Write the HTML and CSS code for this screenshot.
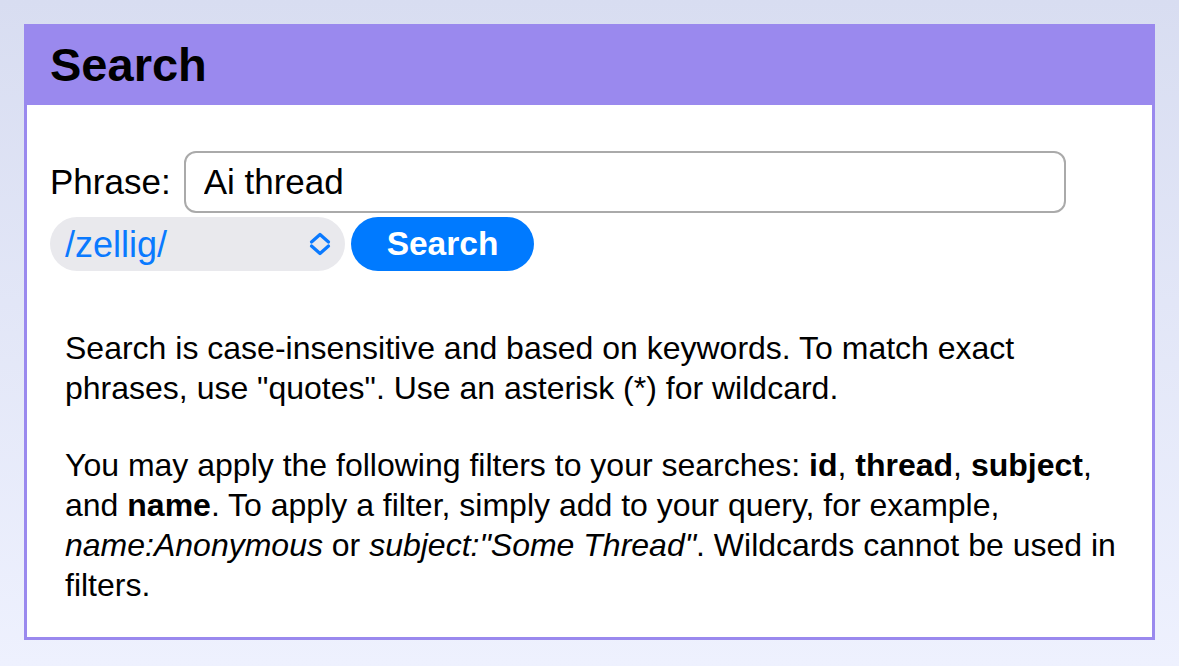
FILE: index.html
```html
<!DOCTYPE html>
<html lang="en">
<head>
<meta charset="utf-8">
<title>Search</title>
<link rel="stylesheet" href="styles.css">
</head>
<body>
<div class="panel">
  <div class="panel-header"><h1 class="panel-title">Search</h1></div>
  <div class="panel-body">
    <form class="search-form">
      <div class="form-row">
        <label class="phrase-label" for="phrase">Phrase:</label>
        <input class="phrase-input" id="phrase" type="text" value="Ai thread">
      </div>
      <div class="form-row form-row-actions">
        <div class="board-select">
          <select class="board-select-control">
            <option>/zellig/</option>
          </select>
          <svg class="board-select-icon" width="24" height="24" viewBox="0 0 24 24" aria-hidden="true">
            <path d="M3.5 10 L12 2.5 L20.5 10" fill="none" stroke="#0a7aff" stroke-width="3.2" stroke-linecap="round" stroke-linejoin="round"/>
            <path d="M3.5 14 L12 21.5 L20.5 14" fill="none" stroke="#0a7aff" stroke-width="3.2" stroke-linecap="round" stroke-linejoin="round"/>
          </svg>
        </div>
        <button class="search-button" type="button">Search</button>
      </div>
    </form>
    <div class="search-help">
      <p>Search is case-insensitive and based on keywords. To match exact phrases, use "quotes". Use an asterisk (*) for wildcard.</p>
      <p>You may apply the following filters to your searches: <b>id</b>, <b>thread</b>, <b>subject</b>, and <b>name</b>. To apply a filter, simply add to your query, for example, <i>name:Anonymous</i> or <i>subject:"Some Thread"</i>. Wildcards cannot be used in filters.</p>
    </div>
  </div>
</div>
</body>
</html>
```

FILE: styles.css
```css
html, body {
  margin: 0;
  height: 100%;
}

body {
  box-sizing: border-box;
  padding: 24px;
  background: linear-gradient(#d8ddf1, #eef1fe);
  font-family: "Liberation Sans", Arial, sans-serif;
  color: #000;
}

.panel {
  border: 3px solid #9a89ee;
  background: #fff;
}

.panel-header {
  background: #9a89ee;
  padding: 0 23px;
}

.panel-title {
  margin: 0;
  font-size: 47px;
  font-weight: bold;
  line-height: 76px;
  padding-bottom: 2px;
}

.panel-body {
  padding: 46px 27px 32px 23px;
}

.search-form {
  margin: 0;
}

.form-row {
  display: flex;
  align-items: center;
}

.phrase-label {
  font-size: 35px;
  margin-right: 13px;
}

.phrase-input {
  box-sizing: border-box;
  width: 882px;
  height: 62px;
  border: 2px solid #aaaaaa;
  border-radius: 12px;
  padding: 0 0 0 18px;
  font-family: "Liberation Sans", Arial, sans-serif;
  font-size: 35px;
  color: #000;
  background: #fff;
  outline: none;
}

.form-row-actions {
  margin-top: 4px;
  gap: 6px;
}

.board-select {
  position: relative;
  width: 295px;
  height: 54px;
}

.board-select-control {
  appearance: none;
  -webkit-appearance: none;
  box-sizing: border-box;
  width: 100%;
  height: 100%;
  border: none;
  border-radius: 27px;
  background: #e9e9ed;
  color: #0a7aff;
  font-family: "Liberation Sans", Arial, sans-serif;
  font-size: 36px;
  padding: 0 0 0 15px;
  outline: none;
}

.board-select-icon {
  position: absolute;
  right: 13px;
  top: 15px;
  pointer-events: none;
}

.search-button {
  box-sizing: border-box;
  width: 183px;
  height: 54px;
  border: none;
  border-radius: 27px;
  background: #007aff;
  color: #fff;
  font-family: "Liberation Sans", Arial, sans-serif;
  font-size: 33.5px;
  font-weight: bold;
  padding: 0;
}

.search-help {
  margin-top: 57px;
  padding-left: 15px;
  font-size: 32px;
  line-height: 40px;
}

.search-help p {
  margin: 0;
}

.search-help p + p {
  margin-top: 37px;
}
```
